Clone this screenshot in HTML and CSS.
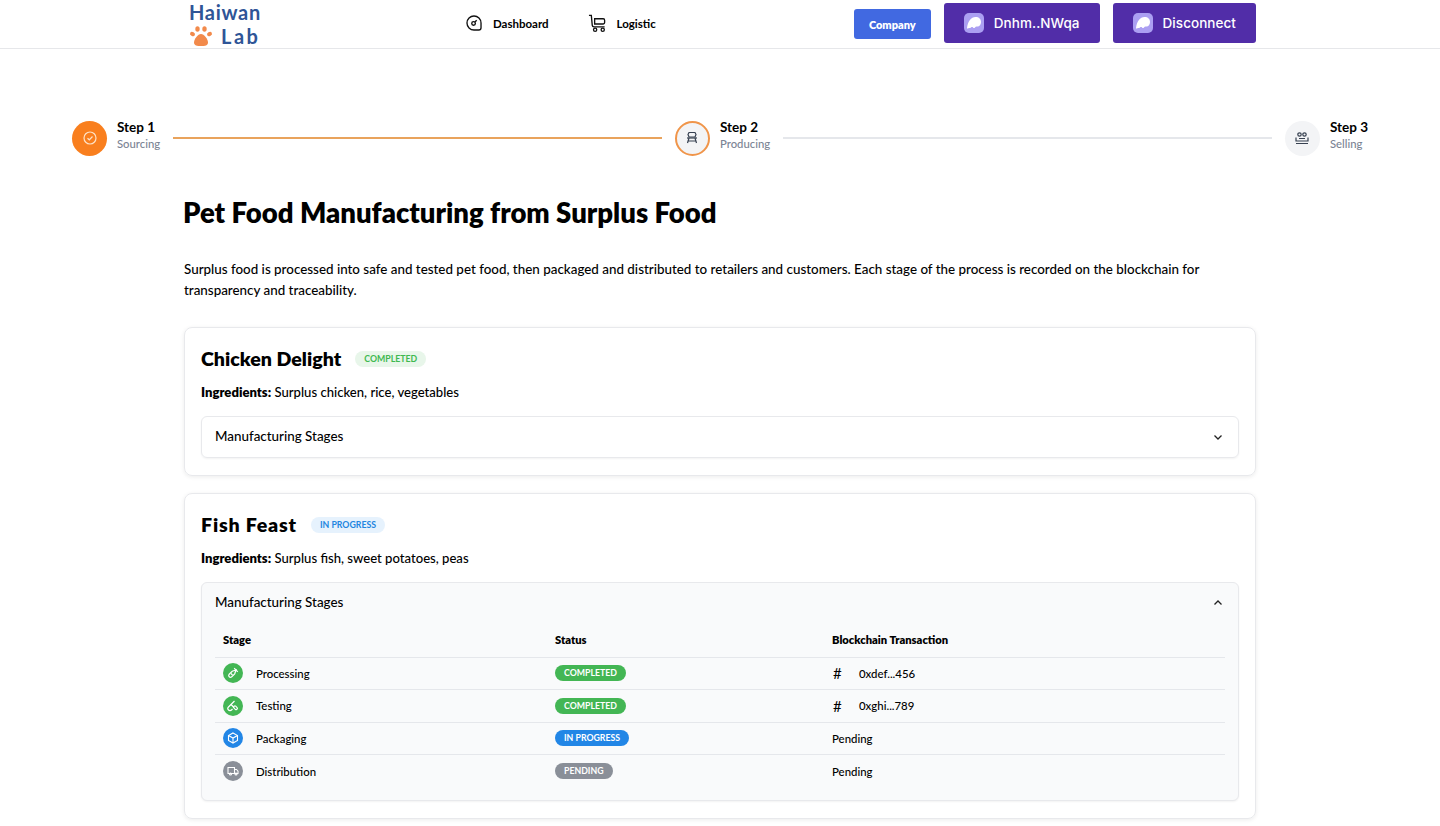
FILE: index.html

```html
<!DOCTYPE html>
<html lang="en">
<head>
    <meta charset="UTF-8">
    <meta name="viewport" content="width=device-width, initial-scale=1.0">
    <title>Haiwan Lab</title>
    <link rel="stylesheet" href="styles.css">
</head>
<body>
<header class="topbar">
    <div class="topbar-inner">
        <div class="logo">
            <div class="logo-line">Haiwan</div>
            <div class="logo-line logo-second">
                <svg class="paw" viewBox="0 0 24 22" width="24" height="22" fill="#f28a4b">
                    <ellipse cx="3.5" cy="9" rx="2.6" ry="2.1" transform="rotate(30 3.5 9)"/>
                    <ellipse cx="8.5" cy="4" rx="2.2" ry="2.8"/>
                    <ellipse cx="15.5" cy="4" rx="2.2" ry="2.8"/>
                    <ellipse cx="20.5" cy="9" rx="2.6" ry="2.1" transform="rotate(-30 20.5 9)"/>
                    <path d="M12 9c3 0 7 5 7 8.5 0 3-3 3.500-7 3.500s-7-.5-7-3.500C5 14 9 9 12 9z"/>
                </svg>
                <span>Lab</span>
            </div>
        </div>
        <nav class="nav">
            <a class="nav-link">
                <svg width="18" height="18" viewBox="0 0 20 20" fill="none" stroke="#111" stroke-width="1.5"><path d="M10 2.2a7.800 7.800 0 0 1 7.800 7.800v5.300a2.500 2.500 0 0 1-2.500 2.500H10A7.800 7.800 0 0 1 10 2.200z"/><circle cx="9.5" cy="10.5" r="2"/><path d="M11 9l2-2"/></svg>
                Dashboard
            </a>
            <a class="nav-link">
                <svg width="19" height="19" viewBox="0 0 20 20" fill="none" stroke="#111" stroke-width="1.4"><path d="M1 1.500h2.500l1 10.500c.1 1 .8 1.500 1.700 1.500h11.300"/><path d="M7 5h9a1.500 1.500 0 0 1 1.500 1.500V9a1.500 1.500 0 0 1-1.500 1.500H7z"/><circle cx="7.5" cy="16.5" r="1.7"/><circle cx="15.5" cy="16.5" r="1.7"/></svg>
                Logistic
            </a>
        </nav>
        <div class="actions">
            <button class="btn-company">Company</button>
            <button class="btn-wallet">
                <span class="ghost"><svg width="14" height="12" viewBox="0 0 14 12" fill="#fff"><path d="M0 11C1 4 4 0 8.500 0 12 0 14 2 14 5c0 3-2 5-4 4.500-1-.2-1.500.3-2 1-.8 1-1.500.5-2 0-.6-.6-1.200-.6-2 0-.7.500-1.500.7-2 .5-1 .4-2 .8-2 .5z"/></svg></span>
                Dnhm..NWqa
            </button>
            <button class="btn-wallet">
                <span class="ghost"><svg width="14" height="12" viewBox="0 0 14 12" fill="#fff"><path d="M0 11C1 4 4 0 8.500 0 12 0 14 2 14 5c0 3-2 5-4 4.500-1-.2-1.500.3-2 1-.8 1-1.500.5-2 0-.6-.6-1.200-.6-2 0-.7.500-1.500.7-2 .5-1 .4-2 .8-2 .5z"/></svg></span>
                Disconnect
            </button>
        </div>
    </div>
</header>

<section class="stepper">
    <div class="step">
        <span class="step-icon step-done">
            <svg width="16" height="16" viewBox="0 0 16 16" fill="none" stroke="#fde3c8" stroke-width="1.2"><circle cx="8" cy="8" r="6"/><path d="M5.500 8.200l1.800 1.600 3.200-3.300"/></svg>
        </span>
        <div class="step-text">
            <div class="step-title">Step 1</div>
            <div class="step-sub">Sourcing</div>
        </div>
    </div>
    <div class="step-line step-line-done"></div>
    <div class="step">
        <span class="step-icon step-active">
            <svg width="14" height="14" viewBox="0 0 14 14" fill="none" stroke="#374151" stroke-width="1.2"><path d="M4 1.500h6l1 2-1 2.500H4L3 3.500z"/><path d="M2 7h10"/><path d="M4 7l-1.500 5M10 7l1.500 5M3.500 10h7"/></svg>
        </span>
        <div class="step-text">
            <div class="step-title">Step 2</div>
            <div class="step-sub">Producing</div>
        </div>
    </div>
    <div class="step-line"></div>
    <div class="step">
        <span class="step-icon">
            <svg width="14" height="14" viewBox="0 0 14 14" fill="none" stroke="#374151" stroke-width="1.2"><circle cx="4.5" cy="3.5" r="1.7"/><circle cx="9.5" cy="3.5" r="1.7"/><path d="M1 6.500v3.500h12V6.500"/><path d="M4 7.500h6M1 12.500h12"/></svg>
        </span>
        <div class="step-text">
            <div class="step-title">Step 3</div>
            <div class="step-sub">Selling</div>
        </div>
    </div>
</section>

<main class="container">
    <h1>Pet Food Manufacturing from Surplus Food</h1>
    <p class="intro">Surplus food is processed into safe and tested pet food, then packaged and distributed to retailers and customers. Each stage of the process is recorded on the blockchain for transparency and traceability.</p>

    <article class="card">
        <div class="card-head">
            <h2>Chicken Delight</h2>
            <span class="tag tag-green">COMPLETED</span>
        </div>
        <p class="ingredients"><b>Ingredients:</b> Surplus chicken, rice, vegetables</p>
        <div class="accordion">
            <div class="accordion-head">
                <span>Manufacturing Stages</span>
                <svg width="10" height="10" viewBox="0 0 10 10" fill="none" stroke="#222" stroke-width="1.3"><path d="M1.500 3.500L5 7l3.500-3.500"/></svg>
            </div>
        </div>
    </article>

    <article class="card">
        <div class="card-head">
            <h2 class="title-wide">Fish Feast</h2>
            <span class="tag tag-blue">IN PROGRESS</span>
        </div>
        <p class="ingredients"><b>Ingredients:</b> Surplus fish, sweet potatoes, peas</p>
        <div class="accordion accordion-open">
            <div class="accordion-head">
                <span>Manufacturing Stages</span>
                <svg width="10" height="10" viewBox="0 0 10 10" fill="none" stroke="#222" stroke-width="1.3"><path d="M1.500 6.500L5 3l3.500 3.500"/></svg>
            </div>
            <table class="stages">
                <thead>
                    <tr>
                        <th class="col-stage">Stage</th>
                        <th class="col-status">Status</th>
                        <th>Blockchain Transaction</th>
                    </tr>
                </thead>
                <tbody>
                    <tr>
                        <td><div class="stage-name"><span class="stage-icon bg-green"><svg width="12" height="12" viewBox="0 0 12 12" fill="none" stroke="#fff" stroke-width="1.2"><path d="M7.200 1.200l3.600 3.600M9 3L7.700 6.800 4.500 10a1.800 1.800 0 0 1-2.500-2.500l3.200-3.200z"/><path d="M4 6.500l1.500 1.500"/></svg></span>Processing</div></td>
                        <td><span class="pill bg-green">COMPLETED</span></td>
                        <td><div class="tx"><span class="hash">#</span>0xdef...456</div></td>
                    </tr>
                    <tr>
                        <td><div class="stage-name"><span class="stage-icon bg-green"><svg width="12" height="12" viewBox="0 0 12 12" fill="none" stroke="#fff" stroke-width="1.2"><path d="M7.500 1L1.500 7a2 2 0 0 0 3 3l1-1"/><path d="M4 4.500l3 3"/><rect x="6.500" y="6.500" width="4" height="2.500" rx="1" transform="rotate(45 8.500 7.750)"/></svg></span>Testing</div></td>
                        <td><span class="pill bg-green">COMPLETED</span></td>
                        <td><div class="tx"><span class="hash">#</span>0xghi...789</div></td>
                    </tr>
                    <tr>
                        <td><div class="stage-name"><span class="stage-icon bg-blue"><svg width="12" height="12" viewBox="0 0 12 12" fill="none" stroke="#fff" stroke-width="1.1"><path d="M6 1l4.500 2.500v5L6 11 1.500 8.500v-5z"/><path d="M1.500 3.500L6 6l4.500-2.500M6 6v5"/></svg></span>Packaging</div></td>
                        <td><span class="pill bg-blue">IN PROGRESS</span></td>
                        <td>Pending</td>
                    </tr>
                    <tr>
                        <td><div class="stage-name"><span class="stage-icon bg-gray"><svg width="12" height="12" viewBox="0 0 12 12" fill="none" stroke="#fff" stroke-width="1.1"><path d="M1 2.500h6.500v6H1zM7.500 4.500h2l1.500 1.700v2.300H7.500z"/><circle cx="3.5" cy="9" r="1"/><circle cx="9" cy="9" r="1"/></svg></span>Distribution</div></td>
                        <td><span class="pill bg-gray">PENDING</span></td>
                        <td>Pending</td>
                    </tr>
                </tbody>
            </table>
        </div>
    </article>
</main>
</body>
</html>
```

FILE: styles.css

```css
* {
    box-sizing: border-box;
}
html, body {
    height: 826px;
    overflow: hidden;
}
body {
    margin: 0;
    background-color: #fff;
    color: #000;
    font-family: 'Lato', sans-serif;
}
.topbar {
    height: 49px;
    border-bottom: 1px solid #e6e7ea;
}
.topbar-inner {
    width: 1072px;
    height: 48px;
    margin: 0 auto;
    display: flex;
    align-items: flex-start;
}
.logo {
    width: 272px;
    padding-left: 5px;
    color: #2f5597;
    font-size: 20px;
    font-weight: 700;
    line-height: 24px;
    letter-spacing: 0.7px;
}
.logo-second {
    display: flex;
    align-items: center;
    gap: 8px;
}
.logo-second span {
    letter-spacing: 2.5px;
}
.nav {
    display: flex;
    gap: 39px;
    height: 46px;
    align-items: center;
    width: 398px;
    padding-left: 9px;
}
.nav-link {
    display: flex;
    align-items: center;
    gap: 10px;
    font-size: 11.5px;
    font-weight: 700;
}
.actions {
    display: flex;
    gap: 13px;
    padding-top: 3px;
    align-items: flex-start;
    margin-left: auto;
}
.btn-company {
    height: 30px;
    width: 77px;
    margin-top: 6px;
    border: none;
    border-radius: 3px;
    background-color: #4169e1;
    color: #fff;
    font-family: inherit;
    font-size: 11px;
    font-weight: 800;
}
.btn-wallet {
    height: 40px;
    display: flex;
    align-items: center;
    gap: 10px;
    padding: 0 20px;
    border: none;
    border-radius: 3px;
    background-color: #512da8;
    color: #fff;
    font-family: 'Inter', sans-serif;
    font-size: 13.5px;
    font-weight: 500;
    letter-spacing: 0.05px;
}
.ghost {
    width: 20px;
    height: 20px;
    border-radius: 5px;
    background-color: #ab9ff2;
    display: flex;
    align-items: center;
    justify-content: center;
}
.stepper {
    display: flex;
    align-items: center;
    padding: 0 72px;
    margin-top: 71px;
    height: 36px;
}
.step {
    display: flex;
    align-items: center;
    gap: 10px;
}
.step-text {
    padding-bottom: 5px;
}
.step-icon {
    width: 35px;
    height: 35px;
    border-radius: 50%;
    background-color: #f3f4f6;
    display: flex;
    align-items: center;
    justify-content: center;
}
.step-done {
    background-color: #f97f1e;
}
.step-active {
    border: 2px solid #f0954a;
}
.step-title {
    font-size: 13.5px;
    font-weight: 700;
    line-height: 17px;
}
.step-sub {
    font-size: 11.3px;
    font-weight: 500;
    color: #7b8494;
    line-height: 16px;
}
.step-line {
    flex: 1;
    height: 2px;
    margin: 0 13px;
    background-color: #e5e7eb;
}
.step-line-done {
    background-color: #e9a35c;
}
.container {
    width: 1072px;
    margin: 0 auto;
}
h1 {
    margin: 38px 0 0 -1px;
    font-size: 27.5px;
    font-weight: 800;
    line-height: 38px;
}
.intro {
    margin: 27px 0 26px;
    font-size: 13.4px;
    font-weight: 500;
    line-height: 21px;
}
.card {
    border: 1px solid #e8e9ec;
    border-radius: 8px;
    box-shadow: 0 1px 4px rgba(0, 0, 0, 0.08);
    padding: 16px 16px 17px;
    margin-bottom: 17px;
}
.card-head {
    display: flex;
    align-items: center;
    gap: 14px;
    height: 28px;
}
h2 {
    margin: 0;
    font-size: 19.6px;
    font-weight: 800;
}
.title-wide {
    letter-spacing: 0.8px;
}
.tag {
    margin-top: 1px;
    font-size: 8.75px;
    font-weight: 700;
    line-height: 16px;
    padding: 0 9px;
    border-radius: 8px;
}
.tag-green {
    background-color: #e8f6ea;
    color: #3fb950;
}
.tag-blue {
    background-color: #e6f2fd;
    color: #2286e0;
}
.ingredients {
    margin: 10px 0 14px;
    font-size: 13.1px;
    font-weight: 500;
    line-height: 20px;
}
.ingredients b {
    font-weight: 800;
}
.accordion {
    border: 1px solid #e8e9ec;
    border-radius: 6px;
    box-shadow: 0 1px 2px rgba(0, 0, 0, 0.05);
}
.accordion-open {
    background-color: #f9fafb;
    padding-bottom: 13px;
}
.accordion-head {
    height: 40px;
    padding: 0 15px 2px 13px;
    display: flex;
    align-items: center;
    justify-content: space-between;
    font-size: 13.4px;
    font-weight: 500;
}
.accordion-head svg {
    margin-top: 2px;
}
.stages {
    width: 1010px;
    margin: 0 13px;
    border-collapse: collapse;
    table-layout: fixed;
    font-size: 11.4px;
    font-weight: 500;
}
.stages th {
    text-align: left;
    font-size: 11.2px;
    font-weight: 800;
    height: 34px;
    padding: 0 8px;
    border-bottom: 1px solid #e5e7eb;
}
.col-stage {
    width: 332px;
}
.col-status {
    width: 277px;
}
.stages td {
    height: 32.5px;
    padding: 0 8px;
    border-bottom: 1px solid #e5e7eb;
}
.stages tr:last-child td {
    border-bottom: none;
}
.stage-name {
    display: flex;
    align-items: center;
    gap: 13px;
}
.stage-icon {
    width: 20px;
    height: 20px;
    border-radius: 50%;
    display: flex;
    align-items: center;
    justify-content: center;
}
.pill {
    display: inline-block;
    color: #fff;
    font-size: 8.75px;
    font-weight: 700;
    line-height: 16px;
    padding: 0 9px;
    border-radius: 8px;
}
.bg-green {
    background-color: #43b654;
}
.bg-blue {
    background-color: #2286e6;
}
.bg-gray {
    background-color: #8a8f98;
}
.tx {
    display: flex;
    align-items: center;
}
.hash {
    width: 27px;
    padding-left: 1px;
    font-size: 15px;
    font-weight: 400;
}
```
